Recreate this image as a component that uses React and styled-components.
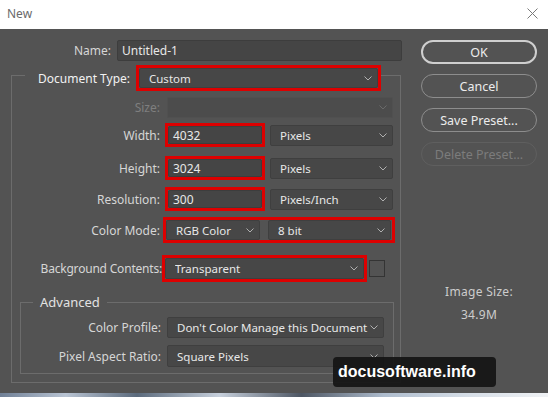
import React from "react";
import styled, { createGlobalStyle } from "styled-components";

const GlobalStyle = createGlobalStyle`
  html, body {
    margin: 0;
    padding: 0;
    background: #535353;
  }
  body {
    font-family: "Noto Sans", "Open Sans", sans-serif;
    font-size: 12px;
  }
  * {
    box-sizing: border-box;
  }
`;

const Window = styled.div`
  position: relative;
  width: 548px;
  height: 397px;
  overflow: hidden;
  background: #535353;
  display: flex;
  flex-direction: column;
`;

const TitleBar = styled.div`
  height: 29px;
  flex: none;
  background: #ffffff;
  display: flex;
  align-items: center;
  justify-content: space-between;
  padding: 0 10px 2px 7px;
  color: #6a6a6a;
  font-size: 12px;
`;

const Body = styled.div`
  flex: 1;
  display: flex;
`;

const LeftColumn = styled.div`
  width: 403px;
  padding: 11px 0 0 11px;
`;

const RightColumn = styled.div`
  flex: 1;
  padding: 11px 0 0 18px;
  display: flex;
  flex-direction: column;
`;

const NameRow = styled.div`
  display: flex;
  align-items: center;
  height: 21px;
`;

const Label = styled.div`
  width: ${(p) => p.$w}px;
  flex: none;
  text-align: right;
  padding-right: ${(p) => p.$gap ?? 6}px;
  white-space: nowrap;
  color: ${(p) => (p.$dim ? "#7f7f7f" : p.$bright ? "#f2f2f2" : "#d6d6d6")};
  font-size: ${(p) => p.$size || 12}px;
  letter-spacing: ${(p) => p.$ls || 0}px;
`;

const TextInput = styled.div`
  width: ${(p) => (p.$w ? `${p.$w}px` : "100%")};
  height: ${(p) => (p.$h ? `${p.$h}px` : "100%")};
  background: #454545;
  border: 1px solid #3d3d3d;
  border-radius: 2px;
  color: #e8e8e8;
  padding-left: 4px;
  display: flex;
  align-items: center;
`;

const SelectBox = styled.div`
  width: ${(p) => (p.$w ? `${p.$w}px` : "100%")};
  height: ${(p) => (p.$h ? `${p.$h}px` : "100%")};
  margin-left: ${(p) => p.$ml || 0}px;
  flex: none;
  background: ${(p) => (p.$disabled ? "#4c4c4c" : "#474747")};
  border: 1px solid ${(p) => (p.$disabled ? "#505050" : "#3f3f3f")};
  border-radius: 2px;
  color: #e8e8e8;
  font-size: 11.5px;
  padding: 0 5px 0 9px;
  display: flex;
  align-items: center;
  gap: 2px;
`;

const SelectText = styled.span`
  flex: 1;
  white-space: nowrap;
  overflow: hidden;
`;

const Chevron = styled.svg`
  flex: none;
  width: 8px;
  height: 5px;
  stroke: ${(p) => (p.$disabled ? "#6a6a6a" : "#b0b0b0")};
  fill: none;
  stroke-width: 1;
`;

const Highlight = styled.div`
  width: ${(p) => p.$w}px;
  height: ${(p) => p.$h}px;
  flex: none;
  border: 3px solid #dd0000;
  display: flex;
  gap: ${(p) => p.$gap || 0}px;
  padding-right: ${(p) => p.$pr || 0}px;
`;

const Frame = styled.fieldset`
  margin: ${(p) => p.$margin};
  padding: ${(p) => p.$padding};
  border: 1px solid #6c6c6c;
  min-width: 0;
`;

const MainLegend = styled.legend`
  margin-left: 13px;
  padding: 6px 0 0 0;
  display: flex;
  align-items: center;
`;

const SmallLegend = styled.legend`
  margin-left: 12px;
  padding: 0 7px;
  color: #e2e2e2;
  font-size: 13px;
  line-height: 17px;
`;

const Row = styled.div`
  display: flex;
  align-items: center;
  height: ${(p) => p.$h}px;
  margin-top: ${(p) => p.$mt}px;
`;

const Swatch = styled.div`
  width: 16px;
  height: 17px;
  margin-left: 2px;
  border: 1px solid #343434;
`;

const Button = styled.div`
  width: 116px;
  height: 24px;
  margin-bottom: 10px;
  border-radius: 12px;
  border: ${(p) =>
    p.$primary ? "2px solid #cfcfcf" : p.$disabled ? "1px solid #5f5f5f" : "1.5px solid #8d8d8d"};
  color: ${(p) => (p.$disabled ? "#7c7c7c" : "#ececec")};
  font-size: 12.5px;
  display: flex;
  align-items: center;
  justify-content: center;
`;

const InfoText = styled.div`
  width: 116px;
  text-align: center;
  color: #cdcdcd;
  line-height: 16px;
  margin-top: ${(p) => p.$mt}px;
  letter-spacing: 0.3px;
`;

const PhotoStrip = styled.div`
  height: 4px;
  flex: none;
  background: linear-gradient(
    90deg,
    #6f7f95 0%,
    #b9c4d3 12%,
    #5b6a7c 25%,
    #c7d0dc 40%,
    #4d5663 55%,
    #aebccd 70%,
    #d5dde6 85%,
    #f0f2f5 100%
  );
`;

const Watermark = styled.div`
  position: absolute;
  left: 333px;
  top: 357px;
  width: 163px;
  height: 30px;
  border-radius: 4px;
  background: rgba(20, 20, 20, 0.93);
  color: #ffffff;
  font-family: "Liberation Sans", Arial, sans-serif;
  font-weight: bold;
  font-size: 16px;
  line-height: 30px;
  padding-left: 5px;
`;

const CloseIcon = styled.svg`
  width: 11px;
  height: 11px;
  stroke: #7a7a7a;
  stroke-width: 1;
`;

const Select = ({ value, disabled, w, h, ml }) => (
  <SelectBox $w={w} $h={h} $ml={ml} $disabled={disabled}>
    <SelectText>{value}</SelectText>
    <Chevron viewBox="0 0 8 5" $disabled={disabled}>
      <polyline points="0.5,0.5 4,4 7.5,0.5" />
    </Chevron>
  </SelectBox>
);

export default function App() {
  return (
    <>
      <GlobalStyle />
      <Window>
        <TitleBar>
          <span>New</span>
          <CloseIcon viewBox="0 0 11 11">
            <line x1="0.5" y1="0.5" x2="10.5" y2="10.5" />
            <line x1="10.5" y1="0.5" x2="0.5" y2="10.5" />
          </CloseIcon>
        </TitleBar>
        <Body>
          <LeftColumn>
            <NameRow>
              <Label $w={106}>Name:</Label>
              <TextInput $w={285} $h={21}>Untitled-1</TextInput>
            </NameRow>
            <Frame $margin="-2px 0 0 0" $padding="0 0 8px 0" style={{ width: 390 }}>
              <MainLegend>
                <Label $w={111} $bright $size={12}>
                  Document Type:
                </Label>
                <Highlight $w={245} $h={26}>
                  <Select value="Custom" />
                </Highlight>
              </MainLegend>

              <Row $h={21} $mt={6}>
                <Label $w={153} $gap={5} $dim>
                  Size:
                </Label>
                <Select value="" disabled w={226} h={21} ml={2} />
              </Row>

              <Row $h={24} $mt={5}>
                <Label $w={153} $gap={5}>Width:</Label>
                <Highlight $w={100} $h={24}>
                  <TextInput>4032</TextInput>
                </Highlight>
                <Select value="Pixels" w={123} h={21} ml={5} />
              </Row>

              <Row $h={24} $mt={9}>
                <Label $w={153} $gap={5}>Height:</Label>
                <Highlight $w={100} $h={24}>
                  <TextInput>3024</TextInput>
                </Highlight>
                <Select value="Pixels" w={123} h={21} ml={5} />
              </Row>

              <Row $h={24} $mt={7}>
                <Label $w={153} $gap={5}>Resolution:</Label>
                <Highlight $w={100} $h={24}>
                  <TextInput>300</TextInput>
                </Highlight>
                <Select value="Pixels/Inch" w={123} h={21} ml={5} />
              </Row>

              <Row $h={26} $mt={6}>
                <Label $w={151} $gap={3}>Color Mode:</Label>
                <Highlight $w={232} $h={26} $gap={8} $pr={1}>
                  <Select value="RGB Color" w={94} />
                  <Select value="8 bit" w={123} />
                </Highlight>
              </Row>

              <Row $h={27} $mt={12}>
                <Label $w={150} $gap={0} $ls={-0.2}>
                  Background Contents:
                </Label>
                <Highlight $w={205} $h={27}>
                  <Select value="Transparent" />
                </Highlight>
                <Swatch />
              </Row>

              <Frame $margin="12px 6px 0 8px" $padding="0 0 6px 0">
                <SmallLegend>Advanced</SmallLegend>
                <Row $h={21} $mt={6}>
                  <Label $w={146}>Color Profile:</Label>
                  <Select value="Don't Color Manage this Document" w={217} h={21} />
                </Row>
                <Row $h={22} $mt={7}>
                  <Label $w={146}>Pixel Aspect Ratio:</Label>
                  <Select value="Square Pixels" w={217} h={22} />
                </Row>
              </Frame>
            </Frame>
          </LeftColumn>

          <RightColumn>
            <Button $primary>OK</Button>
            <Button>Cancel</Button>
            <Button>Save Preset...</Button>
            <Button $disabled>Delete Preset...</Button>
            <InfoText $mt={108}>Image Size:</InfoText>
            <InfoText $mt={7}>34.9M</InfoText>
          </RightColumn>
        </Body>
        <PhotoStrip />
        <Watermark>docusoftware.info</Watermark>
      </Window>
    </>
  );
}
